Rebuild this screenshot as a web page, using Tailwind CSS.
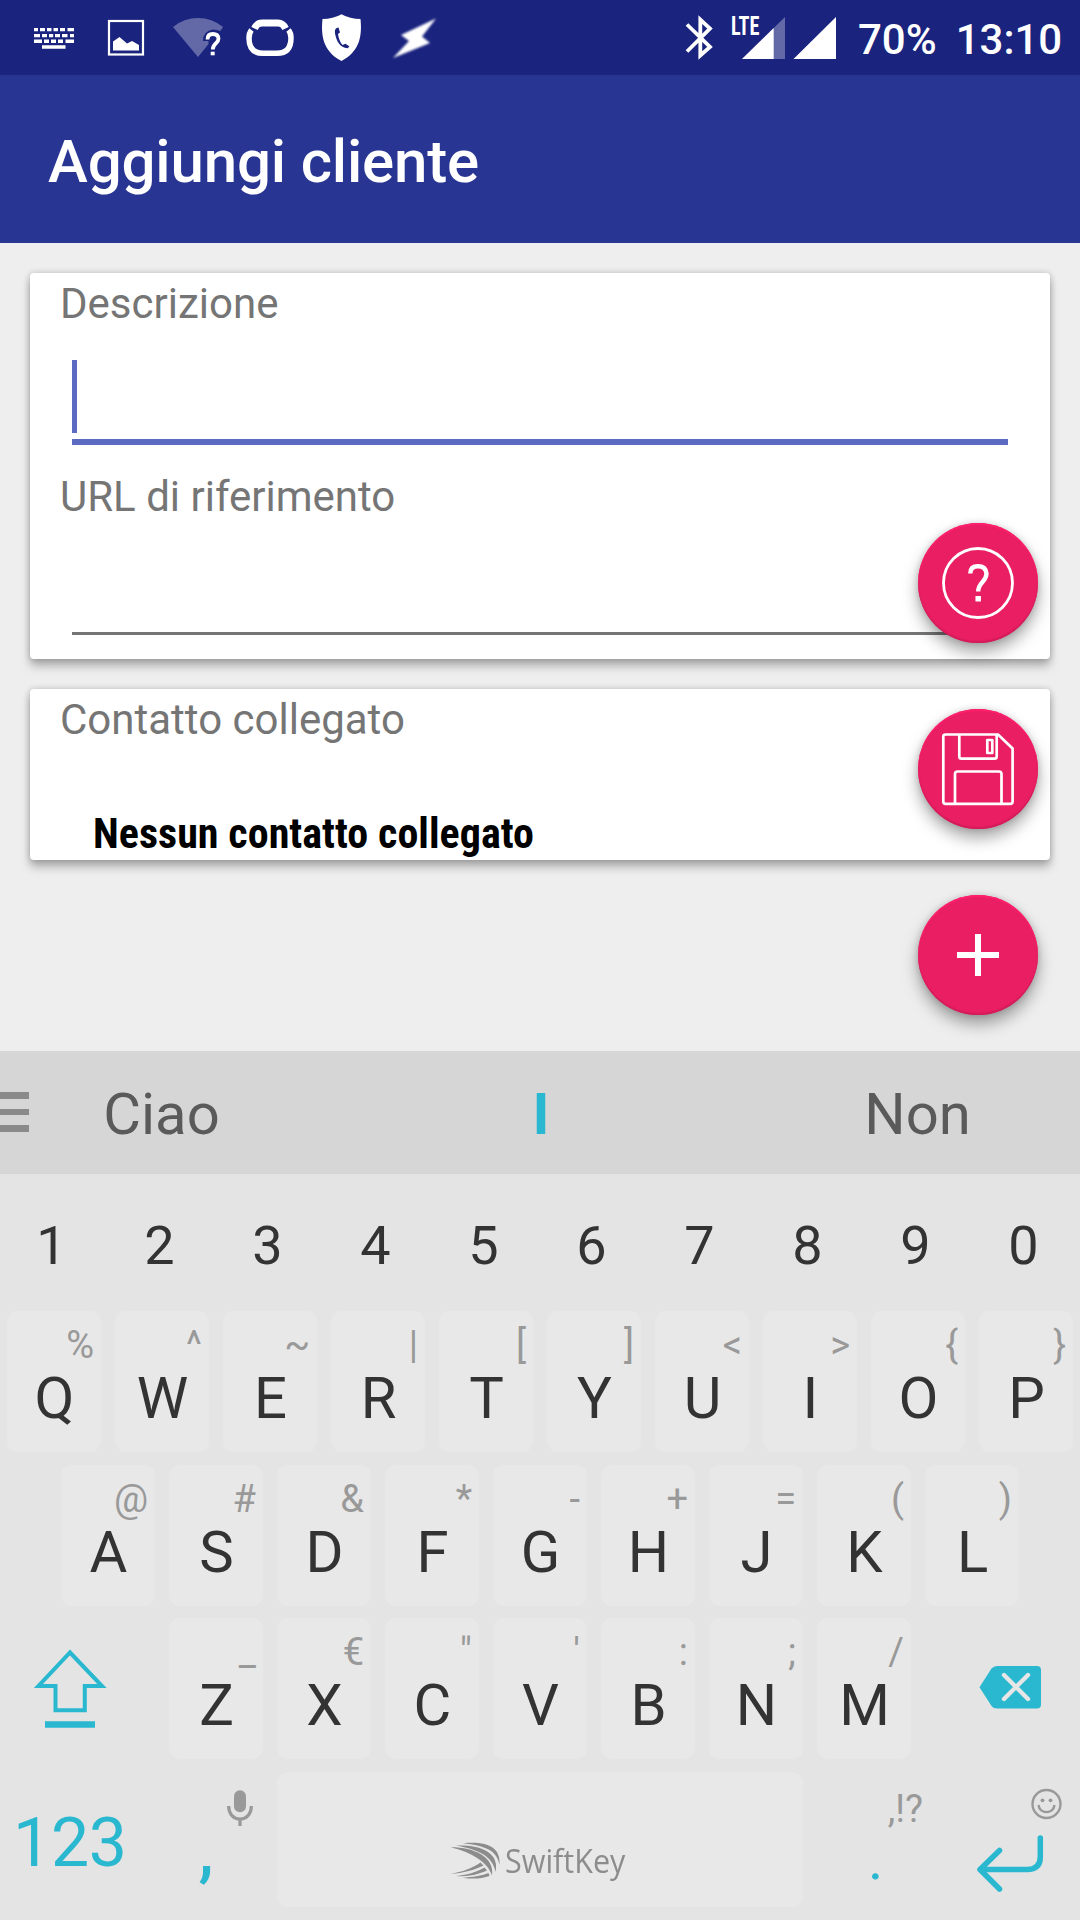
<!DOCTYPE html>
<html lang="it">
<head>
<meta charset="utf-8">
<title>Aggiungi cliente</title>
<script src="https://cdn.jsdelivr.net/npm/@tailwindcss/browser@4"></script>
</head>
<body class="w-[1080px] h-[1920px] overflow-hidden bg-[#eeeeee] font-['Roboto',sans-serif] flex flex-col">

<!-- Status bar -->
<header class="h-[75px] shrink-0 bg-[#1a237e] flex text-white">
  <svg class="ml-[30px]" width="50" height="75" viewBox="30 0 50 75" fill="#fff">
    <path d="M34 28h4v3.300h-4zM40 28h5v3.300h-5zM47 28h4.500v3.300h-4.500zM53.500 28h4.500v3.300h-4.500zM60 28h5v3.300h-5zM67.500 28h6.500v3.300h-6.500zM34 34h6v3.300h-6zM42 34h5v3.300h-5zM49 34h4.200v3.300h-4.200zM55 34h5v3.300h-5zM62 34h5.500v3.300h-5.500zM70 34h4v3.300h-4zM34 39.500h8v3.500h-8zM44 39.500h5v3.500h-5zM51 39.500h5v3.500h-5zM58 39.500h5v3.500h-5zM65.500 39.500h8.500v3.500h-8.500zM42 45.300h23.500v3.500h-23.500z"/>
  </svg>
  <svg class="ml-[24px]" width="44" height="75" viewBox="104 0 44 75" fill="#fff">
    <rect x="109" y="21" width="34" height="33.500" fill="none" stroke="#fff" stroke-width="2.200"/>
    <path d="M113 41.500l6.500-4.500 7.500 6.500 5-2.500 7 4V50.500h-26z"/>
  </svg>
  <svg class="ml-[22px]" width="58" height="75" viewBox="170 0 58 75">
    <path d="M173 27Q184 18 198 18T223 27L220.500 31Q217 29.500 213 29.500Q203 31 203 41H208.500V44L198 57Z" fill="#fff" opacity=".32"/>
    <path d="M207.500 39.500Q207.500 34 212.800 34T218.500 38.500C218.500 43.500 212.800 43.500 212.800 49.500" fill="none" stroke="#fff" stroke-width="3.800"/>
    <rect x="210.700" y="51.700" width="4" height="3.600" fill="#fff"/>
  </svg>
  <svg class="ml-[14px]" width="56" height="75" viewBox="242 0 56 75" fill="none" stroke="#fff" stroke-width="5.500">
    <path d="M251.500 30Q249 33 249 38Q249 53.300 263 53.300H277Q291 53.300 291 38Q291 33 288.500 30"/>
    <path d="M254.500 28.500Q257 23 262 23H278Q283 23 285.500 28.500" stroke-width="7"/>
  </svg>
  <svg class="ml-[20px]" width="48" height="75" viewBox="318 0 48 75">
    <path d="M341.500 14.200Q350 19 360.500 19C362 34 361 51 341.500 61C322 51 321 34 322.500 19Q333 19 341.500 14.200Z" fill="#fff"/>
    <path d="M338.500 27.500Q334 28 335 33.500C336.500 41 340 48 347.500 48.200L349.500 46.500L345.500 43.800L342.500 45C340 42 338.600 38.500 338 34L340 32.500Z" fill="#1a237e"/>
  </svg>
  <svg class="ml-[22px] blur-[1px]" width="52" height="75" viewBox="388 0 52 75">
    <path d="M436 18.500L401 35L409 41L393 58L430 43L422 36.500Z" fill="#fff"/>
  </svg>
  <svg class="ml-[242px]" width="36" height="75" viewBox="682 0 36 75" fill="none" stroke="#fff" stroke-width="3.800">
    <path d="M687 24.500L710 47L700.300 55.500V19.500L710 28.500L687 51.500"/>
  </svg>
  <svg class="ml-[12px]" width="108" height="75" viewBox="730 0 108 75" fill="#fff">
    <path d="M742 59L785 17V59Z" opacity=".32"/>
    <path d="M742 59L773.700 28V59Z"/>
    <path d="M793.500 59L836 17V59Z"/>
    <text class="[font-stretch:75%]" x="731" y="35" font-size="25.500" font-weight="700" textLength="28.500" lengthAdjust="spacingAndGlyphs">LTE</text>
  </svg>
  <span class="ml-[20px] pt-[2px] text-[42px] leading-[75px] font-medium">70%</span>
  <span class="ml-[19px] pt-[2px] text-[42px] leading-[75px] font-medium">13:10</span>
</header>

<!-- App bar -->
<div class="h-[168px] shrink-0 bg-[#283593] pt-[56px] pl-[48px]">
  <h1 class="text-[60px] leading-[61px] tracking-[-0.16px] font-medium text-white">Aggiungi cliente</h1>
</div>

<!-- Form -->
<main class="relative h-[808px] shrink-0 px-[30px] pt-[30px] flex flex-col gap-[30px]">
  <section class="h-[386px] bg-white rounded-[4px] pt-[6px] pl-[30px] shadow-[0_7px_10px_rgba(0,0,0,0.27),0_0_6px_rgba(0,0,0,0.2)]">
    <label class="block text-[42px] leading-[49px] text-[#757575]">Descrizione</label>
    <div class="ml-[12px] mt-[32px] w-[936px] h-[85px] border-b-[6px] border-[#5c6bc0]">
      <div class="w-[5px] h-[73px] bg-[#5c6bc0]"></div>
    </div>
    <label class="mt-[27px] block text-[42px] leading-[49px] text-[#757575]">URL di riferimento</label>
    <div class="ml-[12px] w-[936px] h-[114px] border-b-[3px] border-[#757575]"></div>
  </section>
  <section class="h-[171px] bg-white rounded-[4px] pt-[6px] pl-[30px] shadow-[0_7px_10px_rgba(0,0,0,0.27),0_0_6px_rgba(0,0,0,0.2)]">
    <label class="block text-[42px] leading-[49px] text-[#757575]">Contatto collegato</label>
    <p class="mt-[65px] ml-[33px] text-[42px] leading-[49px] tracking-[0.05px] font-bold text-black whitespace-nowrap [font-stretch:75%]">Nessun contatto collegato</p>
  </section>

  <!-- Floating buttons -->
  <div class="absolute right-[42px] top-[280px] flex flex-col gap-[66px]">
    <button class="size-[120px] rounded-full bg-[#e91e63] shadow-[0_9px_16px_rgba(0,0,0,0.35),0_0_6px_rgba(0,0,0,0.15),inset_0_2px_1px_#ff1f6d,inset_0_-2px_1px_#d41b5a]">
      <svg width="120" height="120" viewBox="0 0 120 120" fill="none" stroke="#fff">
        <circle cx="60" cy="60" r="34.500" stroke-width="2.800"/>
        <path d="M52.300 50.500Q52.300 43.300 60 43.300T68.500 50.500C68.500 59 60.200 59 60.200 68.500" stroke-width="4.400"/>
        <path d="M60.200 73V78.500" stroke-width="5.500"/>
      </svg>
    </button>
    <button class="size-[120px] rounded-full bg-[#e91e63] shadow-[0_9px_16px_rgba(0,0,0,0.35),0_0_6px_rgba(0,0,0,0.15),inset_0_2px_1px_#ff1f6d,inset_0_-2px_1px_#d41b5a]">
      <svg width="120" height="120" viewBox="0 0 120 120" fill="none" stroke="#fff" stroke-width="2.700" stroke-linejoin="round">
        <path d="M27.500 25.500H80L94.600 39.500V92.500Q94.600 94.800 92.300 94.800H27.500Q25.300 94.800 25.300 92.500V27.500Q25.300 25.500 27.500 25.500Z"/>
        <path d="M41.300 25.500V47.500Q41.300 49.700 43.500 49.700H76.500Q78.700 49.700 78.700 47.500V25.500"/>
        <rect x="69.300" y="31" width="5" height="13"/>
        <path d="M37 94.800V65Q37 62.500 39.500 62.500H81Q83.500 62.500 83.500 65V94.800"/>
      </svg>
    </button>
    <button class="size-[120px] rounded-full bg-[#e91e63] shadow-[0_9px_16px_rgba(0,0,0,0.35),0_0_6px_rgba(0,0,0,0.15),inset_0_2px_1px_#ff1f6d,inset_0_-2px_1px_#d41b5a]">
      <svg width="120" height="120" viewBox="0 0 120 120" stroke="#fff" stroke-width="6"><path d="M39 60H81M60 39V81"/></svg>
    </button>
  </div>
</main>

<!-- Suggestions -->
<div class="h-[123px] shrink-0 bg-[#d6d6d6] flex text-[58px] leading-[122px] pt-[2px] text-[#5a5a5a]">
  <div class="w-[29px] mt-[39px] flex flex-col gap-[10px]">
    <div class="h-[6.500px] bg-[#8a8a8a]"></div>
    <div class="h-[6.500px] bg-[#8a8a8a]"></div>
    <div class="h-[6.500px] bg-[#8a8a8a]"></div>
  </div>
  <div class="w-[265px] text-center">Ciao</div>
  <div class="w-[492px] pl-[2px] text-center font-bold text-[#29b8cf]">I</div>
  <div class="w-[265px] pr-[2px] text-center">Non</div>
</div>

<!-- Keyboard -->
<div class="h-[746px] shrink-0 bg-[#e4e4e4] text-[#333333] flex flex-col">
  <div id="digits" class="h-[137px] shrink-0 flex pt-[6px] text-[54px] leading-[131px]"></div>
  <div id="row1" class="h-[154px] shrink-0 flex justify-center gap-[14px]"></div>
  <div id="row2" class="h-[153px] shrink-0 flex justify-center gap-[14px]"></div>
  <div class="h-[154px] shrink-0 flex">
    <svg width="169" height="141" viewBox="0 1618 169 141" fill="none" stroke="#29b8cf" stroke-width="4">
      <path d="M70 1652.500L102 1686H84.800V1710.300H55.500V1686H38.500Z"/>
      <path d="M45 1724.500H95" stroke-width="6.500"/>
    </svg>
    <div id="row3" class="flex gap-[14px]"></div>
    <svg width="169" height="141" viewBox="911 1618 169 141">
      <path d="M997 1666H1037Q1041 1666 1041 1670V1704.500Q1041 1708.500 1037 1708.500H997Q993.500 1708.500 991.500 1706L979.500 1687.200L991.500 1668.500Q993.500 1666 997 1666Z" fill="#29b8cf"/>
      <path d="M1004 1675L1028 1699M1028 1675L1004 1699" stroke="#e6e6e6" stroke-width="4.400" stroke-linecap="round"/>
    </svg>
  </div>
  <div class="h-[148px] shrink-0 flex text-[#29b8cf]">
    <div class="w-[162px] pl-[13px] text-[68px] leading-[142px] tracking-[-0.3px]">123</div>
    <div class="w-[115px] flex">
      <div class="w-[54px] pl-[36.500px] text-[68px] leading-[158px] font-medium">,</div>
      <svg width="61" height="75" viewBox="216 1772 61 75">
        <rect x="234" y="1790.300" width="12" height="22" rx="6" fill="#999"/>
        <path d="M228.700 1806C228.700 1823.500 251.300 1823.500 251.300 1806M240 1819V1826" fill="none" stroke="#999" stroke-width="3.300"/>
      </svg>
    </div>
    <div class="w-[526px] h-[135px] rounded-[11px] bg-[#e8e8e8] flex text-[#8c8c8c]">
      <svg class="ml-[171px]" width="56" height="135" viewBox="448 1772 56 135" fill="#8c8c8c">
        <path d="M463 1843.300C487 1841 501 1847 499.500 1865C497 1850 484 1845.500 463 1843.300Z"/>
        <path d="M456 1845.500C480 1844.500 500 1852 495.500 1872C493 1856 478 1849.500 456 1845.500Z"/>
        <path d="M450.500 1847.200C474 1847 495 1857 492 1875.500C488 1862 471 1852 450.500 1847.200Z"/>
        <path d="M450.500 1873.800C462 1872 473 1868 480.500 1862.500L483.500 1865.500C475 1870 463 1873.200 450.500 1873.800Z"/>
        <path d="M456 1876C468 1874.700 477 1872 484.500 1867.500L487 1870.500C478 1874.500 468 1877 456 1876Z"/>
        <path d="M462.500 1877.700C473 1877 481 1876 488.500 1873L489.500 1876C482 1878.500 473 1879.500 462.500 1877.700Z"/>
      </svg>
      <span class="ml-[1px] mt-[66px] h-[50px] text-[33px] leading-[46px] origin-left scale-x-[0.925] font-['Open_Sans',sans-serif]">SwiftKey</span>
    </div>
    <div class="w-[120px] flex flex-col">
      <div class="h-[76px] text-right text-[38px] leading-[74px] text-[#999999]">,!?</div>
      <div class="pl-[65px] text-[58px] leading-[22px]">.</div>
    </div>
    <svg width="157" height="148" viewBox="923 1772 157 148" fill="none">
      <g stroke="#999" stroke-width="2.400">
        <circle cx="1046.500" cy="1804" r="14"/>
        <path d="M1038.500 1805C1039.500 1814.500 1053.500 1814.500 1054.500 1805"/>
      </g>
      <circle cx="1042.500" cy="1800.300" r="1.900" fill="#999"/><circle cx="1050.500" cy="1800.300" r="1.900" fill="#999"/>
      <path d="M1040.300 1838V1857Q1040.300 1869.500 1027 1869.500H980M999.500 1850.500L980 1869.500L999.500 1889" stroke="#29b8cf" stroke-width="5.500" stroke-linecap="round" stroke-linejoin="round"/>
    </svg>
  </div>
</div>

<script>
  const key = ([letter, hint]) => `
    <div class="w-[94px] h-[141px] shrink-0 rounded-[11px] bg-[#e8e8e8]">
      <div class="pr-[7px] text-right text-[38px] leading-[68px] text-[#999999]">${hint}</div>
      <div class="pl-[1px] text-center text-[58px] leading-[38px]">${letter}</div>
    </div>`;
  const fill = (id, keys) => { document.getElementById(id).innerHTML = keys.map(key).join(''); };
  document.getElementById('digits').innerHTML = [...'1234567890']
    .map(d => `<div class="w-[108px] pr-[5px] text-center">${d}</div>`).join('');
  fill('row1', [['Q','%'],['W','^'],['E','~'],['R','|'],['T','['],['Y',']'],['U','&lt;'],['I','&gt;'],['O','{'],['P','}']]);
  fill('row2', [['A','@'],['S','#'],['D','&amp;'],['F','*'],['G','-'],['H','+'],['J','='],['K','('],['L',')']]);
  fill('row3', [['Z','_'],['X','€'],['C','"'],['V',"'"],['B',':'],['N',';'],['M','/']]);
</script>
</body>
</html>
